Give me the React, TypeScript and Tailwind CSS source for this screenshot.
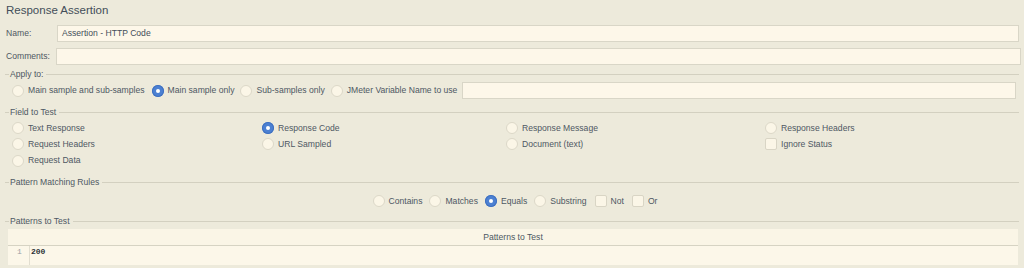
import React from "react";

function Radio({ checked = false }: { checked?: boolean }) {
  return checked ? (
    <span className="flex h-[12px] w-[12px] shrink-0 items-center justify-center rounded-full bg-[#4c80d2] shadow-[inset_0_0_0_1px_#3f70c0]">
      <span className="h-[4px] w-[4px] rounded-full bg-white" />
    </span>
  ) : (
    <span className="h-[12px] w-[12px] shrink-0 rounded-full border border-[#dcd8c8] bg-[#fbf6e7]" />
  );
}

function Check() {
  return <span className="h-[12px] w-[12px] shrink-0 rounded-[2px] border border-[#d9d5c5] bg-[#fbf6e7]" />;
}

function Opt({
  label,
  checked = false,
  box = false,
  gap = "mr-[7px]",
}: {
  label: string;
  checked?: boolean;
  box?: boolean;
  gap?: string;
}) {
  return (
    <div className={`flex items-center ${gap}`}>
      {box ? <Check /> : <Radio checked={checked} />}
      <span className="ml-[4px] whitespace-nowrap">{label}</span>
    </div>
  );
}

function Header({ title }: { title: string }) {
  return (
    <div className="flex h-[12px] items-center pr-[5px]">
      <span className="ml-[5px] h-px w-[4px] bg-[#d3d0c0]" />
      <span className="ml-px whitespace-nowrap">{title}</span>
      <span className="ml-[3px] h-px flex-1 bg-[#d3d0c0]" />
    </div>
  );
}

export default function App() {
  return (
    <div
      className="h-[268px] w-[1024px] overflow-hidden bg-[#edeadb] text-[8.6px] leading-none text-[#4d5863]"
      style={{ fontFamily: '"Liberation Sans", Arial, sans-serif' }}
    >
      <div className="flex h-[22px] items-center pl-[6px] text-[11.5px] text-[#434e59]">Response Assertion</div>

      <div className="mt-[3px] flex h-[17px] items-center pr-[5px]">
        <span className="w-[57px] pl-[6px]">Name:</span>
        <div className="flex h-full flex-1 items-center border border-[#d9d6c7] bg-[#fdf7e9] pl-[4px] text-[#434e59]">
          Assertion - HTTP Code
        </div>
      </div>

      <div className="mt-[6px] flex h-[17px] items-center pr-[3px]">
        <span className="w-[56px] pl-[6px]">Comments:</span>
        <div className="h-full flex-1 border border-[#d9d6c7] bg-[#fdf7e9]" />
      </div>

      <div className="mt-[3px]">
        <Header title="Apply to:" />
      </div>
      <div className="mt-[2px] flex h-[17px] items-center pl-[12px] pr-[8px]">
        <Opt label="Main sample and sub-samples" gap="mr-[7px]" />
        <Opt label="Main sample only" checked gap="mr-[6px]" />
        <Opt label="Sub-samples only" gap="mr-[6px]" />
        <Opt label="JMeter Variable Name to use" gap="mr-[5px]" />
        <div className="h-full flex-1 border border-[#d9d6c7] bg-[#fdf7e9]" />
      </div>

      <div className="mt-[7px]">
        <Header title="Field to Test" />
      </div>
      <div className="mt-[2px] grid grid-cols-[250px_244px_259px_1fr] grid-rows-[16px_16.5px_16.5px] pl-[12px]">
        <Opt label="Text Response" />
        <Opt label="Response Code" checked />
        <Opt label="Response Message" />
        <Opt label="Response Headers" />
        <Opt label="Request Headers" />
        <Opt label="URL Sampled" />
        <Opt label="Document (text)" />
        <Opt label="Ignore Status" box />
        <Opt label="Request Data" />
      </div>

      <div className="mt-[7px]">
        <Header title="Pattern Matching Rules" />
      </div>
      <div className="mt-[5px] flex h-[16px] items-center justify-center pl-[6px]">
        <Opt label="Contains" gap="mr-[7px]" />
        <Opt label="Matches" gap="mr-[7px]" />
        <Opt label="Equals" checked gap="mr-[7px]" />
        <Opt label="Substring" gap="mr-[8px]" />
        <Opt label="Not" box gap="mr-[8px]" />
        <Opt label="Or" box gap="mr-0" />
      </div>

      <div className="mt-[6px]">
        <Header title="Patterns to Test" />
      </div>
      <div className="ml-[8px] mr-[6px] mt-[2px] h-[36px] bg-[#fcf7e9]">
        <div className="flex h-[17px] items-center justify-center border-b border-[#d6d3c3] bg-[#faf5e6]">
          Patterns to Test
        </div>
        <div className="flex h-[19px]">
          <div
            className="w-[22px] border-r border-[#e2ded0] pt-[2px] pl-[9px] text-[8px] text-[#9aa0a4]"
            style={{ fontFamily: '"Liberation Mono", monospace' }}
          >
            1
          </div>
          <div
            className="pl-[1px] pt-[2px] text-[8px] font-bold text-[#2d3338]"
            style={{ fontFamily: '"Liberation Mono", monospace' }}
          >
            200
          </div>
        </div>
      </div>
    </div>
  );
}
